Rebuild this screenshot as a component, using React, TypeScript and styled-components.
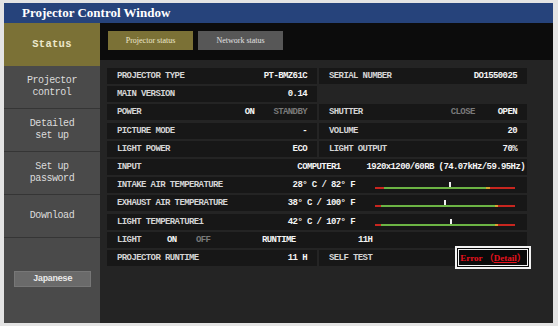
import React from 'react'
import styled, { createGlobalStyle } from 'styled-components'

const GlobalStyle = createGlobalStyle`
  html, body {
    margin: 0;
    padding: 0;
    background: #e4e4e4;
    overflow: hidden;
  }
`

const Frame = styled.div`
  margin: 3px 5px 3px 4px;
  height: 320px;
  display: grid;
  grid-template-columns: 96px 1fr;
  grid-template-rows: 20px 1fr;
  background: #242424;
`

const TitleBar = styled.div`
  grid-column: 1 / -1;
  background: #26437b;
  color: #fff;
  font: bold 13px 'Liberation Serif', serif;
  display: flex;
  align-items: center;
  padding-left: 18px;
`

const Sidebar = styled.nav`
  background: #4a4a4a;
  display: flex;
  flex-direction: column;
`

const NavItem = styled.div<{ $active?: boolean }>`
  height: 43px;
  box-sizing: border-box;
  border-bottom: 1px solid ${p => (p.$active ? '#7b7136' : '#353535')};
  background: ${p => (p.$active ? '#7b7136' : '#4a4a4a')};
  color: ${p => (p.$active ? '#ece8cc' : '#dcdcdc')};
  font: ${p => (p.$active ? 'bold 10.5px' : '10px')} 'Liberation Mono', monospace;
  letter-spacing: ${p => (p.$active ? '0.3px' : '-0.45px')};
  line-height: 12px;
  display: flex;
  align-items: center;
  justify-content: center;
  text-align: center;
  white-space: pre-line;
`

const LangButton = styled.div`
  margin: 33px 0 0 10px;
  width: 77px;
  height: 16px;
  background: #6a6a6a;
  border: 1px solid #777;
  box-sizing: border-box;
  color: #e8e8e8;
  font: bold 9px 'Liberation Mono', monospace;
  letter-spacing: -0.5px;
  display: flex;
  align-items: center;
  justify-content: center;
`

const Main = styled.main`
  display: flex;
  flex-direction: column;
`

const TabBar = styled.div`
  height: 37px;
  background: #0c0c0c;
  display: flex;
  gap: 5px;
  padding: 8px 0 0 8px;
  box-sizing: border-box;
`

const Tab = styled.div<{ $active?: boolean }>`
  width: 85px;
  height: 19px;
  background: ${p => (p.$active ? '#7b7136' : '#575757')};
  color: ${p => (p.$active ? '#ece8cc' : '#e2e2e2')};
  font: 8px 'Liberation Serif', serif;
  display: flex;
  align-items: center;
  justify-content: center;
`

const Table = styled.div`
  margin: 8px 0 0 7px;
  display: grid;
  grid-template-columns: 210px 208px;
  grid-auto-rows: 16px;
  column-gap: 2px;
  row-gap: 2.2px;
`

const Cell = styled.div<{ $wide?: boolean; $pr?: number; $empty?: boolean }>`
  grid-column: ${p => (p.$wide ? '1 / -1' : 'auto')};
  background: ${p => (p.$empty ? 'transparent' : '#171717')};
  display: flex;
  align-items: center;
  padding: 0 ${p => p.$pr ?? 10}px 0 10px;
  font: bold 9px 'Liberation Mono', monospace;
  letter-spacing: -0.6px;
  color: #d4d4d4;
  white-space: pre;
`

const Label = styled.span<{ $w?: number }>`
  ${p => (p.$w ? `width: ${p.$w}px; flex: none;` : 'flex: 1;')}
`

const Val = styled.span<{ $dim?: boolean; $gap?: number; $w?: number }>`
  color: ${p => (p.$dim ? '#7a7a7a' : '#f4f4f4')};
  margin-left: ${p => p.$gap ?? 0}px;
  ${p => (p.$w ? `width: ${p.$w}px; flex: none;` : '')}
`

const GaugeBox = styled.div`
  position: relative;
  width: 140px;
  height: 9px;
  margin-left: 20px;
  align-self: flex-end;
  margin-bottom: 4px;
`

const GaugeLine = styled.div`
  position: absolute;
  left: 0;
  right: 0;
  bottom: 0;
  height: 2px;
`

const Marker = styled.div`
  position: absolute;
  bottom: 2px;
  width: 2px;
  height: 5px;
  background: #f0f0f0;
`

const ErrorBox = styled.div`
  margin-right: -14px;
  width: 76px;
  height: 23px;
  box-sizing: border-box;
  border: 2px solid #f2f2f2;
  background: #0a0a0a;
  padding: 1px;
`

const ErrorInner = styled.div`
  height: 100%;
  box-sizing: border-box;
  border: 1px solid #f2f2f2;
  display: flex;
  align-items: center;
  justify-content: center;
  color: #e8121e;
  font: bold 9px 'Liberation Serif', 'Noto Sans CJK JP', serif;
  letter-spacing: 0;
  u {
    text-decoration-thickness: 1px;
    text-underline-offset: 1px;
  }
`

interface GaugeProps {
  lo: number
  hi: number
  mark: number
}

const Gauge: React.FC<GaugeProps> = ({ lo, hi, mark }) => {
  const red = '#c8261f'
  const green = '#6cb444'
  const amber = '#d9a32e'
  const bg = `linear-gradient(to right, ${red} 0 ${lo}%, ${green} ${lo}% ${hi}%, ${amber} ${hi}% ${hi + 2.5}%, ${red} ${hi + 2.5}% 100%)`
  return (
    <GaugeBox>
      <GaugeLine style={{ background: bg }} />
      <Marker style={{ left: `${mark}%` }} />
    </GaugeBox>
  )
}

const temps = [
  { name: 'INTAKE AIR TEMPERATURE', value: '28° C / 82° F', lo: 6.4, hi: 79.3, mark: 52.9 },
  { name: 'EXHAUST AIR TEMPERATURE', value: '38° C / 100° F', lo: 4.3, hi: 85.7, mark: 49.3 },
  { name: 'LIGHT TEMPERATURE1', value: '42° C / 107° F', lo: 4.3, hi: 85.7, mark: 53.6 }
]

export default function App() {
  return (
    <>
      <GlobalStyle />
      <Frame>
        <TitleBar>Projector Control Window</TitleBar>
        <Sidebar>
          <NavItem $active>Status</NavItem>
          <NavItem>{'Projector\ncontrol'}</NavItem>
          <NavItem>{'Detailed\nset up'}</NavItem>
          <NavItem>{'Set up\npassword'}</NavItem>
          <NavItem>Download</NavItem>
          <LangButton>Japanese</LangButton>
        </Sidebar>
        <Main>
          <TabBar>
            <Tab $active>Projector status</Tab>
            <Tab>Network status</Tab>
          </TabBar>
          <Table>
            <Cell>
              <Label>PROJECTOR TYPE</Label>
              <Val>PT-BMZ61C</Val>
            </Cell>
            <Cell>
              <Label>SERIAL NUMBER</Label>
              <Val>DO1550025</Val>
            </Cell>

            <Cell>
              <Label>MAIN VERSION</Label>
              <Val>0.14</Val>
            </Cell>
            <Cell $empty />

            <Cell>
              <Label>POWER</Label>
              <Val>ON</Val>
              <Val $dim $gap={19}>STANDBY</Val>
            </Cell>
            <Cell>
              <Label>SHUTTER</Label>
              <Val $dim>CLOSE</Val>
              <Val $gap={23}>OPEN</Val>
            </Cell>

            <Cell>
              <Label>PICTURE MODE</Label>
              <Val>-</Val>
            </Cell>
            <Cell>
              <Label>VOLUME</Label>
              <Val>20</Val>
            </Cell>

            <Cell>
              <Label>LIGHT POWER</Label>
              <Val>ECO</Val>
            </Cell>
            <Cell>
              <Label>LIGHT OUTPUT</Label>
              <Val>70%</Val>
            </Cell>

            <Cell $wide $pr={2}>
              <Label>INPUT</Label>
              <Val>COMPUTER1</Val>
              <Val $gap={26}>1920x1200/60RB (74.07kHz/59.95Hz)</Val>
            </Cell>

            {temps.map(t => (
              <Cell $wide $pr={12} key={t.name}>
                <Label>{t.name}</Label>
                <Val>{t.value}</Val>
                <Gauge lo={t.lo} hi={t.hi} mark={t.mark} />
              </Cell>
            ))}

            <Cell $wide>
              <Label $w={50}>LIGHT</Label>
              <Val $w={29}>ON</Val>
              <Val $dim $w={66}>OFF</Val>
              <Val $w={96}>RUNTIME</Val>
              <Val>11H</Val>
            </Cell>

            <Cell>
              <Label>PROJECTOR RUNTIME</Label>
              <Val>11 H</Val>
            </Cell>
            <Cell>
              <Label>SELF TEST</Label>
              <ErrorBox>
                <ErrorInner>
                  Error （<u>Detail</u>）
                </ErrorInner>
              </ErrorBox>
            </Cell>
          </Table>
        </Main>
      </Frame>
    </>
  )
}
